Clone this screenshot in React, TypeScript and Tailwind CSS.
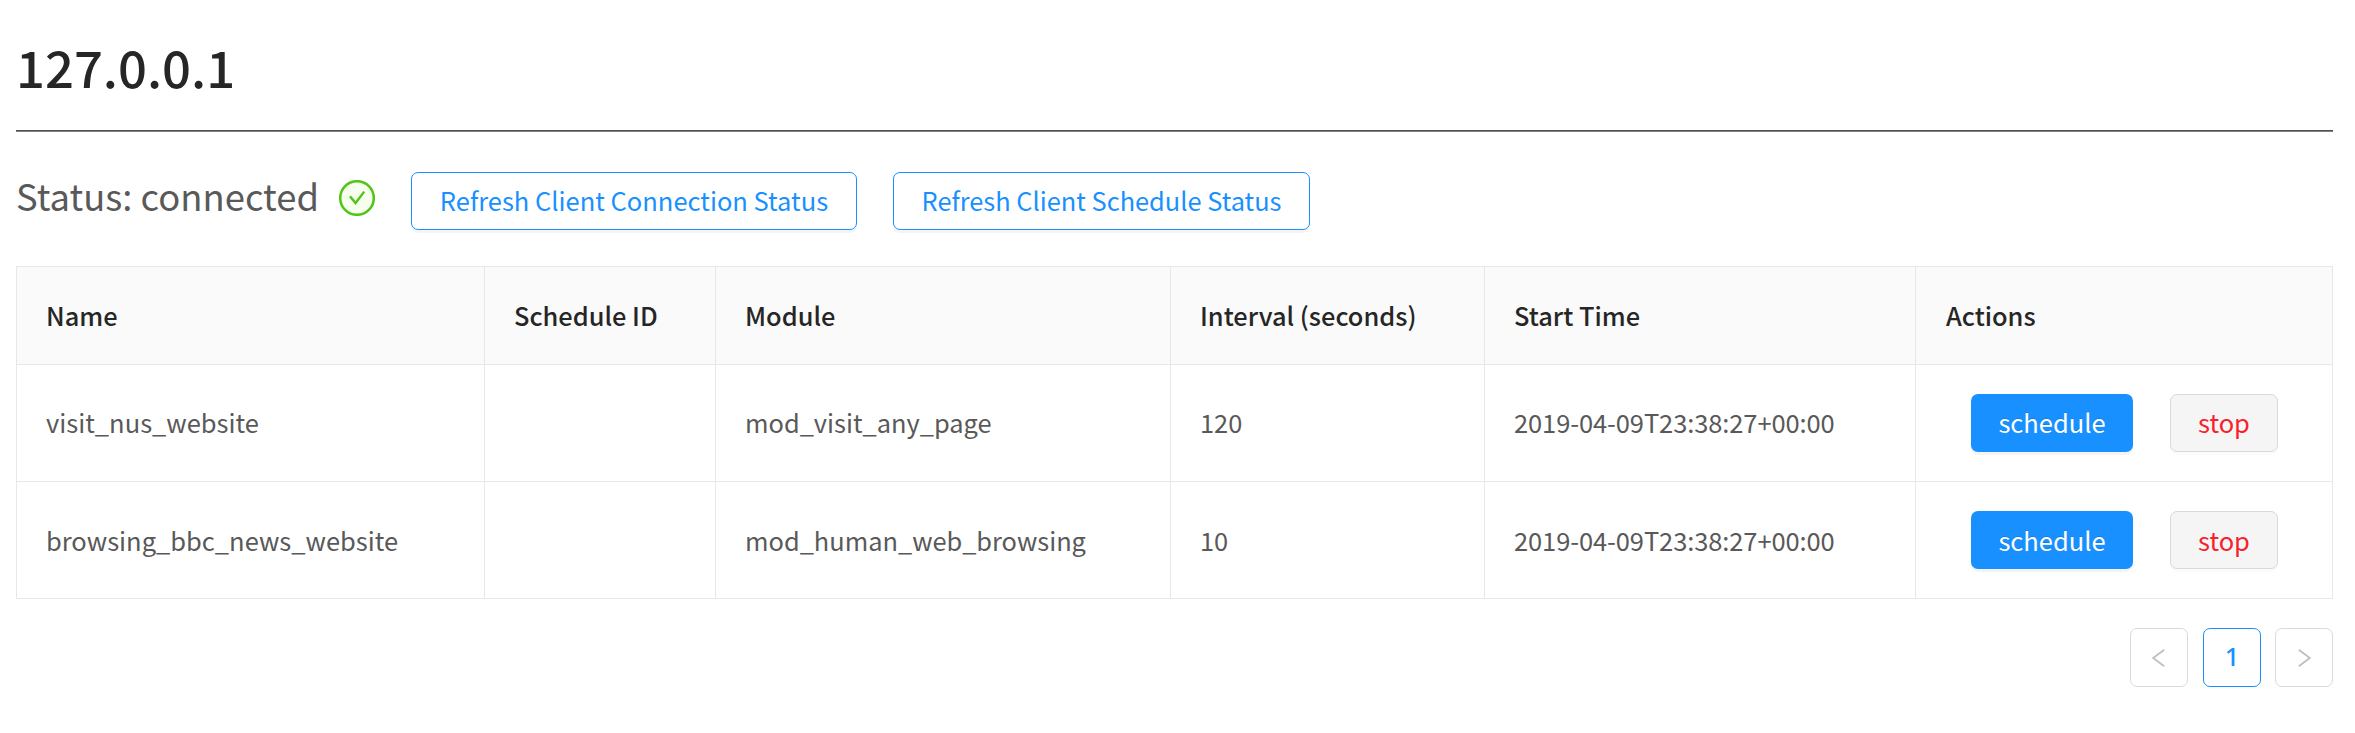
import React from "react";

const columns = ["Name", "Schedule ID", "Module", "Interval (seconds)", "Start Time", "Actions"];

const rows = [
  ["visit_nus_website", "", "mod_visit_any_page", "120", "2019-04-09T23:38:27+00:00"],
  ["browsing_bbc_news_website", "", "mod_human_web_browsing", "10", "2019-04-09T23:38:27+00:00"],
];

const cellText = ["", "", "text-[25.4px]", "text-[25.4px]", "tracking-[-0.1px]"];

function RefreshButton({ label, className }: { label: string; className: string }) {
  return (
    <button
      className={`h-[58px] shrink-0 rounded-[7px] border border-[#1890ff] bg-white text-center leading-none whitespace-nowrap text-[#1890ff] shadow-[0_3px_0_rgba(0,0,0,0.043)] ${className}`}
    >
      {label}
    </button>
  );
}

function CheckCircle() {
  return (
    <svg className="size-9" viewBox="0 0 36 36" fill="none">
      <circle cx="18" cy="18" r="16.8" fill="#f6ffed" stroke="#52c41a" strokeWidth="2.5" />
      <path d="M11 16.4l5.6 6.6 8.6-11.4" stroke="#52c41a" strokeWidth="2.4" />
    </svg>
  );
}

function Arrow({ d }: { d: string }) {
  return (
    <svg className="size-5" viewBox="0 0 20 20" fill="none">
      <path d={d} stroke="#bfbfbf" strokeWidth="1.8" />
    </svg>
  );
}

export default function App() {
  return (
    <main className="h-[733px] bg-white pr-[22px] pl-4 font-['Noto_Sans_CJK_SC',sans-serif] text-[25.5px] text-[#595959]">
      <h1 className="h-[130px] pt-[35px] text-[50.8px] leading-[62px] font-medium text-[#262626]">127.0.0.1</h1>
      <hr className="h-0.5 border-0 border-b border-[#828282] bg-[#4f4f4f]" />

      <div className="flex h-[134px] items-start pt-10">
        <p className="-mt-px w-[323px] shrink-0 text-[36.4px] leading-[48px] whitespace-nowrap">Status: connected</p>
        <div className="mr-9 pt-2">
          <CheckCircle />
        </div>
        <RefreshButton label="Refresh Client Connection Status" className="w-[446px] pb-0.5 text-[25.5px]" />
        <RefreshButton label="Refresh Client Schedule Status" className="ml-9 w-[417px] text-[25.4px]" />
      </div>

      <div className="grid grid-cols-[468px_231px_455px_314px_431px_417px] border-t border-l border-[#e8e8e8]">
        {columns.map((name) => (
          <div
            key={name}
            className="flex h-[98px] items-center border-r border-b border-[#e8e8e8] bg-[#fafafa] pl-[29px] text-[25.4px] font-medium text-[#262626] nth-[6]:pl-[30px]"
          >
            {name}
          </div>
        ))}
        {rows.map((row, r) => (
          <React.Fragment key={row[0]}>
            {row.map((cell, i) => (
              <div
                key={i}
                className={`flex h-[117px] items-center border-r border-b border-[#e8e8e8] pl-[29px] ${r === 0 ? "pb-0.5" : ""} ${cellText[i]}`}
              >
                {cell}
              </div>
            ))}
            <div className="flex h-[117px] items-center border-r border-b border-[#e8e8e8] pl-[55px]">
              <button
                className={`h-[58px] w-[162px] rounded-[7px] bg-[#1890ff] leading-none text-white shadow-[0_3px_0_rgba(0,0,0,0.043)] [text-shadow:0_-1px_0_rgba(0,0,0,0.12)] ${r === 0 ? "pb-0.5" : ""}`}
              >
                schedule
              </button>
              <button
                className={`ml-[37px] h-[58px] w-[108px] rounded-[7px] border border-[#d9d9d9] bg-[#f5f5f5] leading-none text-[#f5222d] shadow-[0_3px_0_rgba(0,0,0,0.015)] ${r === 0 ? "pb-0.5" : ""}`}
              >
                stop
              </button>
            </div>
          </React.Fragment>
        ))}
      </div>

      <nav className="mt-[29px] flex justify-end">
        <button className="flex h-[59px] w-[58px] items-center justify-center rounded-[7px] border border-[#d9d9d9]">
          <Arrow d="M15.2 1.8L4.2 10l11 8.2" />
        </button>
        <button className="mr-3.5 ml-[15px] h-[59px] w-[58px] rounded-[7px] border border-[#1890ff] pb-0.5 font-['Noto_Sans',sans-serif] leading-none font-medium text-[#1890ff]">
          1
        </button>
        <button className="flex h-[59px] w-[58px] items-center justify-center rounded-[7px] border border-[#d9d9d9]">
          <Arrow d="M4.8 1.8L15.8 10l-11 8.2" />
        </button>
      </nav>
    </main>
  );
}
